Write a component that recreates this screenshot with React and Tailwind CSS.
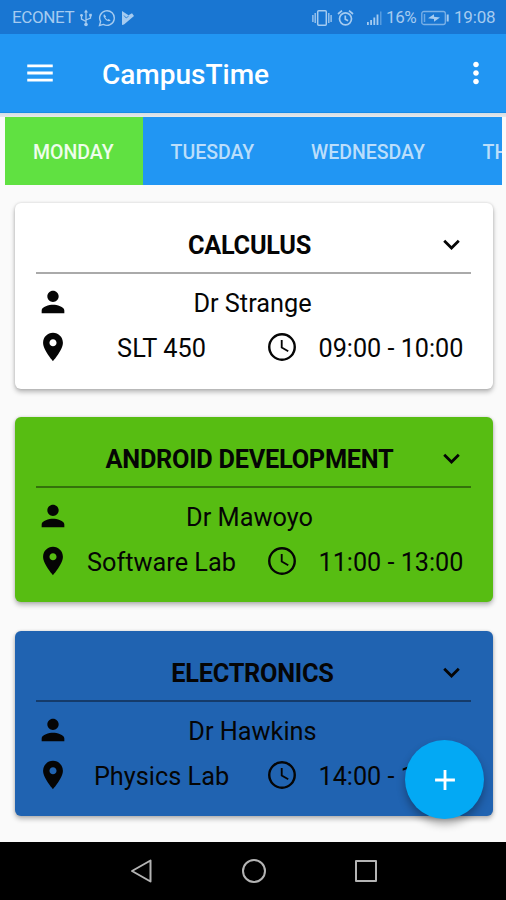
import React from "react";

const ICONS = {
  person: "M12 12c2.21 0 4-1.79 4-4s-1.79-4-4-4-4 1.79-4 4 1.79 4 4 4zm0 2c-2.67 0-8 1.34-8 4v2h16v-2c0-2.66-5.33-4-8-4z",
  place: "M12 2C8.13 2 5 5.13 5 9c0 5.25 7 13 7 13s7-7.75 7-13c0-3.87-3.13-7-7-7zm0 9.5c-1.38 0-2.5-1.12-2.5-2.5s1.12-2.5 2.5-2.5 2.5 1.12 2.5 2.5-1.12 2.5-2.5 2.5z",
  more: "M16.59 8.59L12 13.17 7.41 8.59 6 10l6 6 6-6z",
  menu: "M3 18h18v-2H3v2zm0-5h18v-2H3v2zm0-7v2h18V6H3z",
  dots: "M12 8c1.1 0 2-.9 2-2s-.9-2-2-2-2 .9-2 2 .9 2 2 2zm0 2c-1.1 0-2 .9-2 2s.9 2 2 2 2-.9 2-2-.9-2-2-2zm0 6c-1.1 0-2 .9-2 2s.9 2 2 2 2-.9 2-2-.9-2-2-2z",
  add: "M19 13h-6v6h-2v-6H5v-2h6V5h2v6h6v2z",
};

function Icon({ name, size = "h-[34px] w-[34px]" }) {
  return (
    <svg viewBox="0 0 24 24" fill="currentColor" className={`shrink-0 ${size}`}>
      <path d={ICONS[name]} />
    </svg>
  );
}

function Clock() {
  return (
    <svg viewBox="0 0 24 24" fill="none" stroke="currentColor" className="h-[34px] w-[34px] shrink-0">
      <circle cx="12" cy="12" r="9" strokeWidth="1.7" />
      <path d="M11.8 7v5.3l4.6 2.7" strokeWidth="1.3" />
    </svg>
  );
}

function StatusBar() {
  return (
    <div className="flex h-[34px] shrink-0 items-center bg-[#1976d2] pl-3 pr-[10px] pt-px text-[17px] text-[#a5cbf0]">
      <span className="w-[67px] pt-px text-[17px] tracking-[-0.4px]">ECONET</span>
      <svg viewBox="0 0 14 18" className="h-[18px] w-[14px]" fill="none" stroke="currentColor" strokeWidth="1.3">
        <path d="M7 2v13M7 12.5 2.5 10V6.5M7 11l4.5-2V6" />
        <path d="M5 3.5 7 .5l2 3z" fill="currentColor" stroke="none" />
        <circle cx="7" cy="15.5" r="1.8" fill="currentColor" stroke="none" />
        <circle cx="2.5" cy="6.3" r="1.4" fill="currentColor" stroke="none" />
        <path d="M10.2 4.8h2.6v2.6h-2.6z" fill="currentColor" stroke="none" />
      </svg>
      <svg viewBox="0 0 18 18" className="ml-[5px] h-[18px] w-[18px]" fill="none" stroke="currentColor" strokeWidth="1.4">
        <path d="M1.5 16.5 2.6 12.6A7.3 7.3 0 1 1 5.4 15.4z" />
        <path d="M6.2 5.2c-.8.7-.9 1.7-.4 2.7.9 1.9 2.3 3.3 4.2 4.1 1 .4 2 .2 2.6-.8l-2.1-1.3-.9.9c-1-.5-1.8-1.3-2.3-2.3l.8-.9z" fill="currentColor" stroke="none" />
      </svg>
      <svg viewBox="0 0 13 14" className="ml-[5px] h-[14px] w-[13px]" fill="currentColor">
        <path d="M1 0 7.5 4.200 11 2.200 13 5 3 13.5 1 14z" />
        <path d="m3 4.500 2.2 2.500 2.500-2" fill="none" stroke="#1976d2" strokeWidth=".8" />
      </svg>
      <div className="flex-1" />
      <svg viewBox="0 0 20 18" className="h-[18px] w-[20px]" fill="none" stroke="currentColor" strokeWidth="1.5">
        <rect x="5.7" y="1.8" width="8.6" height="14.4" rx="1" />
        <path d="M3.2 4v10M16.8 4v10M.9 6v7M19.1 6v7" strokeWidth="1.3" />
      </svg>
      <svg viewBox="0 0 17 18" className="ml-[5px] h-[18px] w-[17px]" fill="none" stroke="currentColor" strokeWidth="1.7">
        <circle cx="8.5" cy="9.8" r="6" />
        <path d="M8.3 6.5v3.7l2.8 1.6M1 5l4-3.4M16 5l-4-3.4" />
      </svg>
      <svg viewBox="0 0 17 16" className="ml-[12px] h-[16px] w-[17px]" fill="currentColor">
        <path d="M1 12h1.8v3H1zM4.2 10H6v5H4.2zM7.4 7.5h1.800V15H7.4zM10.6 4.500h1.800V15h-1.800z" />
        <path d="M14 1.500h1.500V15H14z" opacity=".45" />
      </svg>
      <span className="ml-[3px] w-[35px] pt-px text-[17px] tracking-[-0.4px]">16%</span>
      <svg viewBox="0 0 28 16" className="h-[16px] w-[28px]" fill="none" stroke="currentColor">
        <rect x=".8" y="1.500" width="23.500" height="13" rx="2" strokeWidth="1.300" opacity=".7" />
        <path d="M26.700 4.500v7" strokeWidth="2" />
        <path d="M7 8.200 13 4.200v2.600l6 .7-6 4.200V9z" fill="currentColor" stroke="none" />
        <path d="M3.500 4v8" strokeWidth="1.500" opacity=".6" />
      </svg>
      <span className="ml-[5px] w-[42px] whitespace-nowrap pt-px text-[17px] tracking-[-0.2px]">19:08</span>
    </div>
  );
}

const TABS = [
  { day: "MONDAY", style: "w-[137.5px] bg-[#60e141] text-[#effdec]" },
  { day: "TUESDAY", style: "w-[140.5px] text-[#bbdefb]" },
  { day: "WEDNESDAY", style: "w-[171.5px] text-[#bbdefb]" },
  { day: "THURSDAY", style: "w-[155px] text-[#bbdefb]" },
];

const LESSONS = [
  {
    title: "CALCULUS", teacher: "Dr Strange", room: "SLT 450", time: "09:00 - 10:00",
    card: "bg-white h-[186px]", line: "bg-[#aaaaaa]", titlePad: "pl-[28px]", teacherPad: "pr-[36px]",
  },
  {
    title: "ANDROID DEVELOPMENT", teacher: "Dr Mawoyo", room: "Software Lab", time: "11:00 - 13:00",
    card: "bg-[#57bd12] h-[185px]", line: "bg-[#34720b]", titlePad: "pl-[28px]", teacherPad: "pr-[42px]",
  },
  {
    title: "ELECTRONICS", teacher: "Dr Hawkins", room: "Physics Lab", time: "14:00 - 16:00",
    card: "bg-[#2063b1] h-[185px] mt-px", line: "bg-[#153b6a]", titlePad: "pl-[34px]", teacherPad: "pr-[36px]",
  },
];

function LessonCard({ lesson }) {
  return (
    <article className={`shrink-0 rounded-[6px] pl-[21px] pr-[22px] pt-[13px] text-[#050505] shadow-[0_3px_5px_rgba(0,0,0,0.27),0_0_3px_rgba(0,0,0,0.14)] ${lesson.card}`}>
      <div className="flex h-[56px] items-center pr-[3px]">
        <h2 className={`flex-1 whitespace-nowrap pt-[4px] text-center text-[25.3px] font-bold tracking-[-0.25px] ${lesson.titlePad}`}>{lesson.title}</h2>
        <Icon name="more" size="h-[33px] w-[33px]" />
      </div>
      <div className={`h-[2px] ${lesson.line}`} />
      <div className="mt-[5px] flex h-[45px] items-center">
        <Icon name="person" />
        <p className={`flex-1 pt-[4px] text-center text-[25.3px] ${lesson.teacherPad}`}>{lesson.teacher}</p>
      </div>
      <div className="flex h-[45px] items-center">
        <Icon name="place" />
        <p className="w-[183px] whitespace-nowrap pt-[5px] text-center text-[25.3px]">{lesson.room}</p>
        <div className="ml-[12px]"><Clock /></div>
        <p className="flex-1 whitespace-nowrap pl-[19.5px] pt-[5px] text-[25.2px]">{lesson.time}</p>
      </div>
    </article>
  );
}

export default function App() {
  return (
    <div className="relative flex h-[900px] w-[506px] flex-col overflow-hidden bg-[#fafafa] font-[Roboto,sans-serif]">
      <StatusBar />
      <header className="flex h-[79px] shrink-0 items-center border-b border-[#168be8] bg-[#2196f3] pl-[23px] pr-[13px] text-white">
        <Icon name="menu" />
        <h1 className="ml-[45px] flex-1 pt-[4px] text-[28px] font-medium">CampusTime</h1>
        <Icon name="dots" />
      </header>
      <div className="h-[4px] shrink-0 bg-gradient-to-b from-[#d3dde5] to-[#e7e9ea]" />
      <nav className="ml-[5px] mr-[4px] flex h-[68px] shrink-0 overflow-hidden bg-[#2196f3] text-[19.5px] font-medium">
        {TABS.map((tab) => (
          <div key={tab.day} className={`flex shrink-0 items-center pl-[28px] pt-[3px] ${tab.style}`}>{tab.day}</div>
        ))}
      </nav>
      <main className="flex flex-1 flex-col gap-[28px] pl-[15px] pr-[13px] pt-[18px]">
        {LESSONS.map((lesson) => (
          <LessonCard key={lesson.title} lesson={lesson} />
        ))}
      </main>
      <button className="absolute left-[405px] top-[740px] flex h-[79px] w-[79px] items-center justify-center rounded-full bg-[#03a9f4] text-white shadow-[0_5px_8px_rgba(0,0,0,0.32)]">
        <Icon name="add" />
      </button>
      <footer className="flex h-[58px] shrink-0 items-center bg-black pl-[130px] text-[#b4b4b4]">
        <svg viewBox="0 0 24 26" className="h-[26px] w-[24px]" fill="none" stroke="currentColor" strokeWidth="2" strokeLinejoin="round">
          <path d="M20.5 2.5v21L2 13z" />
        </svg>
        <div className="ml-[88px] h-[24px] w-[24px] rounded-full border-2 border-current" />
        <div className="ml-[89px] h-[22px] w-[22px] rounded-[1px] border-2 border-current" />
      </footer>
    </div>
  );
}
